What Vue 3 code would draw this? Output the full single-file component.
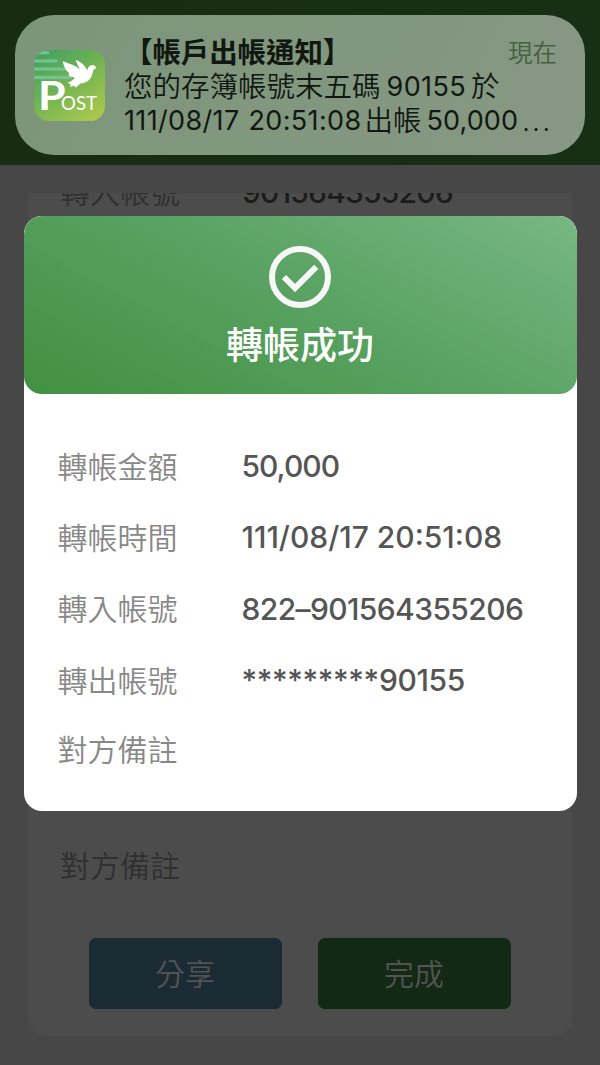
<template>
  <div class="screen">
    <header class="app-header"></header>
    <main class="page">
      <section class="detail-card">
        <div class="card-row cut">
          <span class="card-label">轉入帳號</span>
          <span class="card-value">901564355206</span>
        </div>
        <div class="card-row">
          <span class="card-label">對方備註</span>
        </div>
        <div class="actions">
          <button class="btn share">分享</button>
          <button class="btn done">完成</button>
        </div>
      </section>
    </main>

    <div class="modal" role="dialog" aria-label="轉帳成功">
      <div class="modal-head">
        <svg class="check" viewBox="0 0 62 62" aria-hidden="true">
          <circle cx="31" cy="31" r="28" />
          <path d="M15 31 L26 42 L47.2 20.8" />
        </svg>
        <h1>轉帳成功</h1>
      </div>
      <dl class="modal-body">
        <div v-for="row in rows" :key="row.label" class="row">
          <dt>{{ row.label }}</dt>
          <dd :class="row.kind">{{ row.value }}</dd>
        </div>
      </dl>
    </div>

    <aside class="notice">
      <svg class="app-icon" viewBox="0 0 72 72" aria-hidden="true">
        <defs>
          <linearGradient id="iconBg" x1="0.1" y1="0" x2="0.8" y2="1">
            <stop offset="0" stop-color="#42a161" />
            <stop offset="0.5" stop-color="#73b451" />
            <stop offset="1" stop-color="#a9c74e" />
          </linearGradient>
          <clipPath id="iconClip"><rect width="72" height="72" rx="15" /></clipPath>
        </defs>
        <g clip-path="url(#iconClip)">
          <rect width="72" height="72" fill="url(#iconBg)" />
          <g class="stripes">
            <path d="M0 2.8H14M0 11.2H22.5M0 19.3H31M0 27.8H37" />
          </g>
          <path class="dove" d="M29.2 11.5 C33 13 37.5 14.3 41.5 16.2 C43.6 17.2 45.2 18.6 46.4 20 C45.2 16.4 43.4 13.4 42.2 9.8 C48 12 52.2 16 53.8 20.8 C54.6 17 57 14.8 60.2 15.2 C61 15.3 61.7 16 62.2 16.6 L63.3 18.4 L60.8 19.4 C59.4 22 59.2 26 56.8 29.2 C54.2 32.8 50.5 33.8 47 34 L42.4 38 L40.5 36.3 L36.5 37.6 L37 35 L34.2 33 C37.4 32.2 39.8 30.4 41.4 27.8 C37.8 27.6 35.6 26.4 34.8 24.6 L36 23.6 C32.6 21.8 30 16.6 29.2 11.5 Z" />
          <text class="big" x="4" y="61" textLength="28" lengthAdjust="spacingAndGlyphs">P</text>
          <text class="small" x="27.5" y="61" textLength="36.5" lengthAdjust="spacingAndGlyphs">OST</text>
        </g>
      </svg>
      <div class="notice-text">
        <div class="line title">
          <strong>【帳戶出帳通知】</strong>
          <time>現在</time>
        </div>
        <div class="line"><span>您的存簿帳號末五碼</span><span class="num">90155</span><span>於</span></div>
        <div class="line"><span class="num first">111/08/17 20:51:08</span><span>出帳</span><span class="num sum">50,000</span><span class="dots">...</span></div>
      </div>
    </aside>
  </div>
</template>

<script setup>
const rows = [
  { label: '轉帳金額', value: '50,000', kind: 'amount' },
  { label: '轉帳時間', value: '111/08/17 20:51:08', kind: 'time' },
  { label: '轉入帳號', value: '822–901564355206', kind: 'account' },
  { label: '轉出帳號', value: '*********90155', kind: 'masked' },
  { label: '對方備註', value: '', kind: 'memo' }
]
</script>

<style>
body { background: #474747; }
</style>

<style scoped>
* { box-sizing: border-box; }
.screen { position: relative; width: 600px; height: 1065px; overflow: hidden; background: #474747; font-family: Inter, "Noto Sans CJK TC", sans-serif; }
.app-header { height: 165px; background: linear-gradient(100deg, #182b13, #172f14); }

.page { padding: 28px; }
.detail-card { display: flex; flex-direction: column; height: 843px; background: #4c4c4c; border-radius: 0 0 18px 18px; overflow: hidden; }
.card-row { display: flex; align-items: center; height: 40px; padding-left: 32px; font-size: 30px; line-height: 40px; color: #303030; }
.card-row.cut { margin-top: -21px; margin-bottom: 634px; }
.card-label { width: 182px; font-weight: 350; }
.card-value { font-weight: 500; color: #1c1c1c; letter-spacing: -0.8px; }
.actions { display: flex; gap: 36px; margin-top: 52px; padding-left: 61px; }
.btn { width: 193px; height: 71px; padding: 0 1px 4px 0; border: 0; border-radius: 7px; font-family: inherit; font-size: 30px; font-weight: 350; color: #535353; }
.share { background: #1a2b33; }
.done { background: #122a14; }

.modal { position: absolute; left: 23.5px; top: 216px; width: 553px; height: 595px; border-radius: 18px; background: #fff; overflow: hidden; }
.modal-head { display: flex; flex-direction: column; align-items: center; height: 178px; padding-top: 30px; border-radius: 18px; background: linear-gradient(28deg, #429040 0%, #59a262 52%, #78b783 100%); }
.check { width: 62px; height: 62px; fill: none; stroke: #f7f7f7; stroke-width: 6; }
h1 { margin: 11px 0 0; font-size: 37px; font-weight: 500; line-height: 54px; color: #fff; }
.modal-body { margin: 0; padding: 37px 34px 0; }
.row { display: flex; align-items: center; height: 71.3px; }
.row:last-child { height: 68px; }
dt { width: 184px; font-size: 30px; font-weight: 350; line-height: 40px; color: #888; }
dd { margin: 0; padding-bottom: 1px; font-size: 30px; font-weight: 500; line-height: 40px; color: #555; white-space: nowrap; }
.amount { letter-spacing: -1px; }
.account { letter-spacing: -0.6px; }
.masked { letter-spacing: -0.35px; }

.notice { position: absolute; left: 15px; top: 15px; width: 570px; height: 140px; display: flex; align-items: center; padding-left: 19px; border-radius: 39px; background: linear-gradient(120deg, #7c9679, #879884); color: #111811; }
.app-icon { flex: none; width: 71px; height: 71px; }
.stripes { fill: none; stroke: #75c293; stroke-width: 3.2; stroke-linecap: round; }
.dove { fill: #fff; }
.app-icon text { fill: #fff; font-family: Lato, sans-serif; }
.big { font-size: 40px; font-weight: 700; }
.small { font-size: 20px; font-weight: 400; }
.notice-text { width: 433px; margin-left: 19px; padding-top: 3px; }
.line { display: flex; align-items: center; height: 34px; font-size: 28.5px; font-weight: 350; line-height: 34px; white-space: nowrap; }
.title { justify-content: space-between; }
.title strong { font-weight: 700; letter-spacing: -0.1px; }
.title time { font-size: 24.5px; color: #45613f; }
.num { margin: 0 5px 0 6px; font-size: 27px; font-weight: 400; letter-spacing: 0.4px; }
.num.first { margin: 0 3px 0 0; letter-spacing: 0.35px; word-spacing: 1px; }
.num.sum { margin: 0 4px 0 5px; letter-spacing: 0.1px; }
.dots { letter-spacing: 2px; }
</style>
